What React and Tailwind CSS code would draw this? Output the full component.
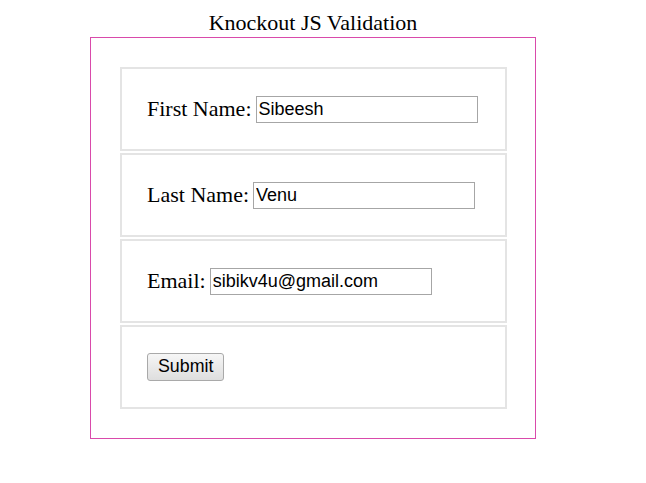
import React, { useState } from "react";

const Field = ({ label, name, value, onChange }) => (
  <div className="h-[84px] border-2 border-[#e4e4e4] flex items-center pl-[25px]">
    <label htmlFor={name} className="text-[22px] leading-none mr-[4px]">
      {label}
    </label>
    <input
      id={name}
      name={name}
      type="text"
      value={value}
      onChange={onChange}
      className="w-[222px] h-[27px] border border-[#a6a6a6] px-[2px] font-['Liberation_Sans',Arial,sans-serif] text-[18px] text-black outline-none"
    />
  </div>
);

const App = () => {
  const [form, setForm] = useState({
    firstName: "Sibeesh",
    lastName: "Venu",
    email: "sibikv4u@gmail.com",
  });

  const handleChange = (e) => {
    setForm({ ...form, [e.target.name]: e.target.value });
  };

  return (
    <div className="w-[646px] h-[483px] bg-white text-black font-['Liberation_Serif','Times_New_Roman',serif]">
      <div className="w-[446px] ml-[90px]">
        <h1 className="text-center text-[22px] leading-[25px] pt-[10px] h-[37px]">
          Knockout JS Validation
        </h1>

        <form
          onSubmit={(e) => e.preventDefault()}
          className="border border-[#d94aab] pt-[29px] pl-[29px] pr-[28px] pb-[29px] flex flex-col gap-[2px]"
        >
          {/* First name */}
          <Field
            label="First Name:"
            name="firstName"
            value={form.firstName}
            onChange={handleChange}
          />

          {/* Last name */}
          <Field
            label="Last Name:"
            name="lastName"
            value={form.lastName}
            onChange={handleChange}
          />

          {/* Email */}
          <Field
            label="Email:"
            name="email"
            value={form.email}
            onChange={handleChange}
          />

          {/* Submit */}
          <div className="h-[84px] border-2 border-[#e4e4e4] flex items-center pl-[25px]">
            <button
              type="submit"
              className="h-[28px] px-[10px] border border-[#a9a9a9] rounded-[3px] bg-gradient-to-b from-[#f6f6f6] to-[#dedede] font-['Liberation_Sans',Arial,sans-serif] text-[17.8px] leading-none text-black"
            >
              Submit
            </button>
          </div>
        </form>
      </div>
    </div>
  );
};

export default App;
